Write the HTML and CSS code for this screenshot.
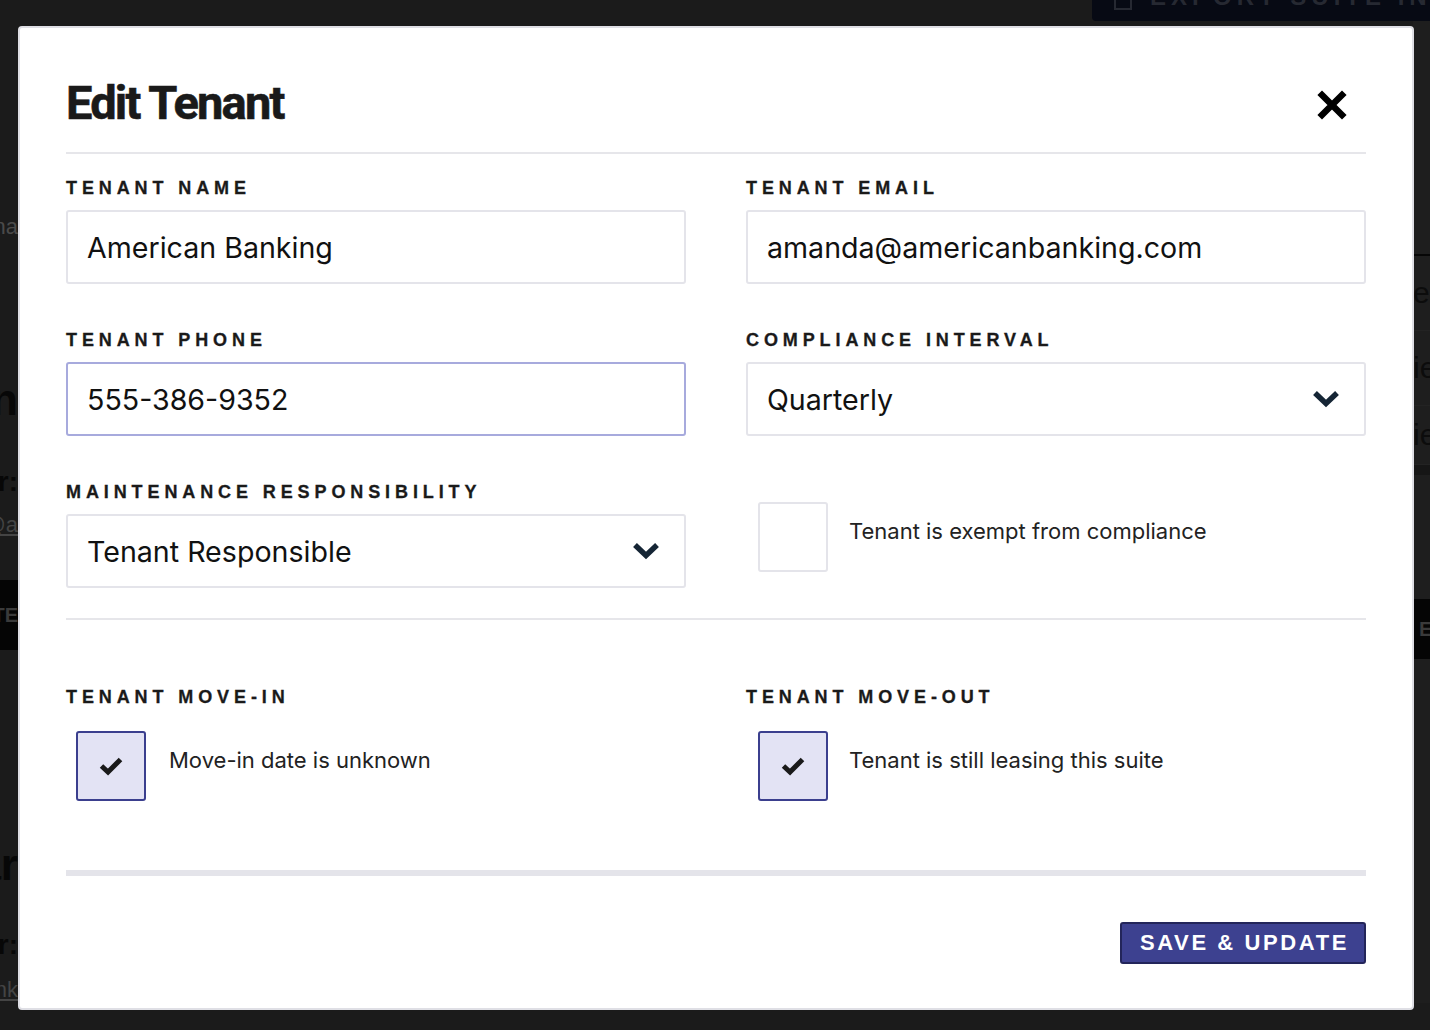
FILE: index.html
```html
<!DOCTYPE html>
<html lang="en">
<head>
    <meta charset="UTF-8">
    <meta name="viewport" content="width=device-width, initial-scale=1.0">
    <title>Edit Tenant</title>
    <link rel="stylesheet" href="styles.css">
</head>
<body>
    <div class="page">
        <div class="page-top">
            <div class="export-btn"><span class="export-icon"></span><span class="export-text">EXPORT SUITE INFO</span></div>
        </div>
        <div class="page-body">
            <div class="side side-left">
                <div class="frag frag-label" style="height: 60px; margin-top: 176px;">Tenant na</div>
                <div class="frag frag-big" style="height: 64px; margin-top: 111px;">Suite 410n</div>
                <div class="frag frag-bold" style="height: 34px; margin-top: 33px;">Owner:</div>
                <div class="frag frag-link" style="height: 30px; margin-top: 11px;">jane@a</div>
                <div class="frag frag-bar" style="height: 70px; margin-top: 40px;">EDITE</div>
                <div class="frag frag-big" style="height: 64px; margin-top: 183px;">Unit ar</div>
                <div class="frag frag-bold" style="height: 34px; margin-top: 31px;">Owner:</div>
                <div class="frag frag-link" style="height: 26px; margin-top: 15px;">bank</div>
            </div>
            <div class="side side-right">
                <div class="rfrag rfrag-line" style="margin-top: 233px;"></div>
                <div class="rfrag rfrag-row" style="height: 74px;">er</div>
                <div class="rfrag rfrag-row" style="height: 74px;">ie</div>
                <div class="rfrag rfrag-row" style="height: 58px;">ie</div>
                <div class="rfrag rfrag-band" style="height: 10px;"></div>
                <div class="rfrag rfrag-bar" style="height: 60px; margin-top: 124px;">E</div>
            </div>
        </div>
    </div>

    <div class="overlay">
        <div class="modal">
            <div class="modal-header">
                <h1 class="modal-title">Edit Tenant</h1>
                <button class="close-btn" type="button" aria-label="Close">
                    <svg width="32" height="32" viewBox="0 0 32 32"><path d="M6 6 L26 26 M26 6 L6 26" stroke="#000" stroke-width="6.5" stroke-linecap="square" fill="none"/></svg>
                </button>
            </div>

            <div class="fields">
                <div class="field">
                    <label class="field-label">TENANT NAME</label>
                    <div class="input">American Banking</div>
                </div>
                <div class="field">
                    <label class="field-label">TENANT EMAIL</label>
                    <div class="input">amanda@americanbanking.com</div>
                </div>
                <div class="field">
                    <label class="field-label">TENANT PHONE</label>
                    <div class="input input-focus">555-386-9352</div>
                </div>
                <div class="field">
                    <label class="field-label">COMPLIANCE INTERVAL</label>
                    <div class="input select">
                        <span>Quarterly</span>
                        <svg width="28" height="18" viewBox="0 0 28 18"><polyline points="3,3 14,13.5 25,3" stroke="#152535" stroke-width="5.5" fill="none" stroke-linejoin="miter"/></svg>
                    </div>
                </div>
                <div class="field">
                    <label class="field-label">MAINTENANCE RESPONSIBILITY</label>
                    <div class="input select">
                        <span>Tenant Responsible</span>
                        <svg width="28" height="18" viewBox="0 0 28 18"><polyline points="3,3 14,13.5 25,3" stroke="#152535" stroke-width="5.5" fill="none" stroke-linejoin="miter"/></svg>
                    </div>
                </div>
                <div class="field field-check">
                    <div class="check-row">
                        <div class="checkbox"></div>
                        <span class="check-text">Tenant is exempt from compliance</span>
                    </div>
                </div>
            </div>

            <div class="moves">
                <div class="field">
                    <label class="field-label">TENANT MOVE-IN</label>
                    <div class="check-row check-row-first">
                        <div class="checkbox checked">
                            <svg width="26" height="20" viewBox="0 0 26 20"><polyline points="3.5,10 10,16 22.5,3.5" stroke="#1a1a1a" stroke-width="5" fill="none"/></svg>
                        </div>
                        <span class="check-text">Move-in date is unknown</span>
                    </div>
                </div>
                <div class="field">
                    <label class="field-label">TENANT MOVE-OUT</label>
                    <div class="check-row">
                        <div class="checkbox checked">
                            <svg width="26" height="20" viewBox="0 0 26 20"><polyline points="3.5,10 10,16 22.5,3.5" stroke="#1a1a1a" stroke-width="5" fill="none"/></svg>
                        </div>
                        <span class="check-text">Tenant is still leasing this suite</span>
                    </div>
                </div>
            </div>

            <div class="modal-footer">
                <button class="save-btn" type="button">SAVE &amp; UPDATE</button>
            </div>
        </div>
    </div>
</body>
</html>
```

FILE: styles.css
```css
body {
    margin: 0;
    background-color: #1b1b1b;
    font-family: Inter, "Noto Sans", sans-serif;
    height: 1030px;
    overflow: hidden;
}

/* dimmed page behind the modal */
.page-top {
    height: 21px;
    display: flex;
    justify-content: flex-end;
}
.export-btn {
    width: 316px;
    padding-left: 22px;
    background-color: #070a14;
    border-radius: 0 0 0 4px;
    display: flex;
    align-items: flex-start;
    gap: 18px;
    overflow: hidden;
    color: #262932;
    font: 700 24px/24px "Liberation Sans", Arial, sans-serif;
    letter-spacing: 5px;
    white-space: nowrap;
}
.export-icon {
    flex: none;
    width: 14px;
    height: 8px;
    border: 2px solid #262932;
    border-top: none;
}
.export-text {
    margin-top: -15px;
}
.page-body {
    display: flex;
    justify-content: space-between;
}
.side {
    display: flex;
    flex-direction: column;
}
.side-left {
    width: 18px;
}
.side-right {
    width: 17px;
    background-color: #1e1e1e;
}
.frag {
    display: flex;
    justify-content: flex-end;
    align-items: center;
    overflow: hidden;
    white-space: nowrap;
    font-family: "Liberation Sans", Arial, sans-serif;
}
.frag-label {
    color: #4a4a4a;
    font-size: 22px;
}
.frag-big {
    color: #070707;
    font-size: 44px;
    font-weight: 700;
}
.frag-bold {
    color: #070707;
    font-size: 28px;
    font-weight: 700;
}
.frag-link {
    color: #444;
    font-size: 22px;
    text-decoration: underline;
}
.frag-bar {
    background-color: #050505;
    color: #3a3a3a;
    font-size: 20px;
    font-weight: 700;
}
.rfrag {
    overflow: hidden;
    white-space: nowrap;
    font-family: "Liberation Sans", Arial, sans-serif;
}
.rfrag-line {
    height: 2px;
    background-color: #060606;
}
.rfrag-row {
    display: flex;
    align-items: center;
    border-bottom: 1px solid #232323;
    color: #0c0c0c;
    font-size: 30px;
}
.rfrag-band {
    background-color: #161616;
}
.rfrag-bar {
    display: flex;
    align-items: center;
    padding-left: 6px;
    background-color: #050505;
    color: #3a3a3a;
    font-size: 20px;
    font-weight: 700;
}

/* modal */
.overlay {
    position: fixed;
    top: 0;
    left: 0;
    right: 0;
    bottom: 0;
    padding: 26px 16px 0 18px;
}
.modal {
    background-color: #ffffff;
    border: 2px solid #dfdfe5;
    border-radius: 4px;
    padding: 47px 46px 44px;
}
.modal-header {
    display: flex;
    justify-content: space-between;
    align-items: center;
    padding-bottom: 21px;
    border-bottom: 2px solid #e6e6ea;
}
.modal-title {
    margin: 0;
    font-family: Roboto, "Liberation Sans", sans-serif;
    font-size: 47px;
    line-height: 56px;
    font-weight: 700;
    letter-spacing: -1.8px;
    color: #1a1a1a;
    -webkit-text-stroke: 0.6px #1a1a1a;
}
.close-btn {
    background: none;
    border: none;
    padding: 0;
    margin: 4px 18px 0 0;
    width: 32px;
    height: 32px;
    display: flex;
    align-items: center;
    justify-content: center;
}
.fields {
    display: grid;
    grid-template-columns: 1fr 1fr;
    column-gap: 60px;
    row-gap: 45px;
    padding: 23px 0 30px;
    border-bottom: 2px solid #e6e6ea;
}
.field-label {
    display: block;
    margin-bottom: 11px;
    font-family: "Liberation Sans", Arial, sans-serif;
    font-size: 18px;
    line-height: 22px;
    font-weight: 700;
    letter-spacing: 4.9px;
    color: #1a1a1a;
    -webkit-text-stroke: 0.3px #1a1a1a;
}
.input {
    box-sizing: border-box;
    height: 74px;
    padding: 0 20px 0 19px;
    border: 2px solid #e4e4ea;
    border-radius: 3px;
    display: flex;
    align-items: center;
    font-size: 28.6px;
    color: #111;
}
.input-focus {
    border-color: #a7aadd;
}
.select {
    justify-content: space-between;
    padding-right: 24px;
}
.field-check {
    padding-top: 21px;
}
.check-row {
    display: flex;
    align-items: flex-start;
    gap: 21px;
    margin-left: 12px;
}
.check-row-first {
    margin-left: 10px;
    gap: 23px;
}
.checkbox {
    flex: none;
    box-sizing: border-box;
    width: 70px;
    height: 70px;
    border: 2px solid #e4e4ea;
    border-radius: 3px;
    display: flex;
    align-items: center;
    justify-content: center;
}
.checkbox.checked {
    background-color: #e3e3f4;
    border-color: #3b3f8e;
}
.check-text {
    padding-top: 15px;
    font-size: 22px;
    line-height: 28px;
    color: #222;
}
.moves {
    display: grid;
    grid-template-columns: 1fr 1fr;
    column-gap: 60px;
    padding: 66px 0 69px;
    border-bottom: 6px solid #e4e4ea;
}
.moves .field-label {
    margin-bottom: 23px;
}
.modal-footer {
    display: flex;
    justify-content: flex-end;
    padding-top: 46px;
}
.save-btn {
    height: 42px;
    padding: 0 15px 0 18px;
    background-color: #3d4190;
    border: 2px solid #23255a;
    border-radius: 3px;
    color: #ffffff;
    font-family: "Liberation Sans", Arial, sans-serif;
    font-size: 22px;
    font-weight: 700;
    letter-spacing: 2.6px;
}
```
